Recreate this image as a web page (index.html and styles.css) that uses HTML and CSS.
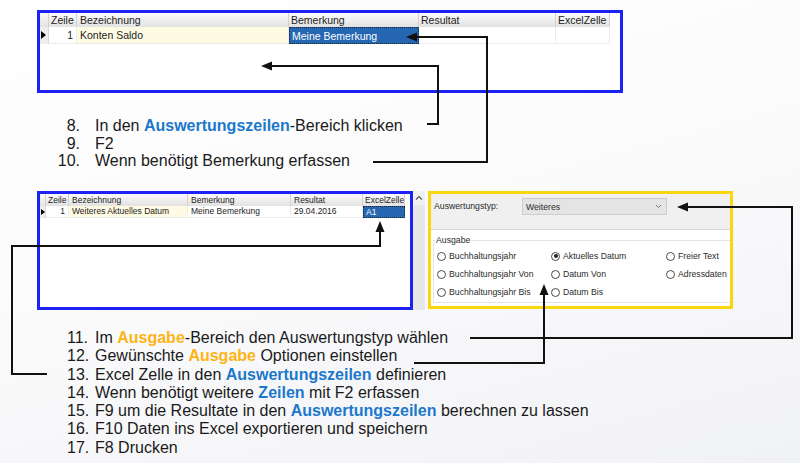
FILE: index.html
```
<!DOCTYPE html>
<html lang="de">
<head>
<meta charset="utf-8">
<title>Auswertung</title>
<link rel="stylesheet" href="styles.css">
</head>
<body>
<div class="page">
  <div class="grid grid-top">
    <div class="row head">
      <div class="c ind"></div><div class="c zeile">Zeile</div><div class="c bez">Bezeichnung</div><div class="c bem">Bemerkung</div><div class="c res">Resultat</div><div class="c xl">ExcelZelle</div>
    </div>
    <div class="row data">
      <div class="c ind"><span class="tri"></span></div><div class="c zeile num">1</div><div class="c bez yel">Konten Saldo</div><div class="c bem sel">Meine Bemerkung</div><div class="c res"></div><div class="c xl"></div>
    </div>
  </div>

  <div class="list list-top">
    <div class="item"><span class="n">8.</span><span class="t">In den <b class="blue">Auswertungszeilen</b>-Bereich klicken</span></div>
    <div class="item"><span class="n">9.</span><span class="t">F2</span></div>
    <div class="item"><span class="n">10.</span><span class="t">Wenn benötigt Bemerkung erfassen</span></div>
  </div>

  <div class="middle">
    <div class="grid grid-mid">
      <div class="row head">
        <div class="c ind"></div><div class="c zeile">Zeile</div><div class="c bez">Bezeichnung</div><div class="c bem">Bemerkung</div><div class="c res">Resultat</div><div class="c xl">ExcelZelle</div>
      </div>
      <div class="row data">
        <div class="c ind"><span class="tri"></span></div><div class="c zeile num">1</div><div class="c bez yel">Weiteres Aktuelles Datum</div><div class="c bem">Meine Bemerkung</div><div class="c res">29.04.2016</div><div class="c xl sel">A1</div>
      </div>
    </div>
    <div class="scroll">
      <div class="scroll-btn"><svg width="8" height="6" viewBox="0 0 8 6"><path d="M1 4.5 L4 1.5 L7 4.5" fill="none" stroke="#555" stroke-width="1.1"/></svg></div>
    </div>
    <div class="panel">
      <div class="typ">
        <span class="typ-lbl">Auswertungstyp:</span>
        <div class="select"><span>Weiteres</span><svg class="chev" width="7" height="5" viewBox="0 0 7 5"><path d="M1 1 L3.5 3.5 L6 1" fill="none" stroke="#777" stroke-width="1"/></svg></div>
      </div>
      <fieldset class="group">
        <legend>Ausgabe</legend>
        <div class="radios">
          <div class="radio"><span class="dot"></span>Buchhaltungsjahr</div>
          <div class="radio"><span class="dot on"></span>Aktuelles Datum</div>
          <div class="radio"><span class="dot"></span>Freier Text</div>
          <div class="radio"><span class="dot"></span>Buchhaltungsjahr Von</div>
          <div class="radio"><span class="dot"></span>Datum Von</div>
          <div class="radio"><span class="dot"></span>Adressdaten</div>
          <div class="radio"><span class="dot"></span>Buchhaltungsjahr Bis</div>
          <div class="radio"><span class="dot"></span>Datum Bis</div>
        </div>
      </fieldset>
    </div>
  </div>

  <div class="list list-bottom">
    <div class="item"><span class="n">11.</span><span class="t">Im <b class="orange">Ausgabe</b>-Bereich den Auswertungstyp wählen</span></div>
    <div class="item"><span class="n">12.</span><span class="t">Gewünschte <b class="orange">Ausgabe</b> Optionen einstellen</span></div>
    <div class="item"><span class="n">13.</span><span class="t">Excel Zelle in den <b class="blue">Auswertungszeilen</b> definieren</span></div>
    <div class="item"><span class="n">14.</span><span class="t">Wenn benötigt weitere <b class="blue">Zeilen</b> mit F2 erfassen</span></div>
    <div class="item"><span class="n">15.</span><span class="t">F9 um die Resultate in den <b class="blue">Auswertungszeilen</b> berechnen zu lassen</span></div>
    <div class="item"><span class="n">16.</span><span class="t">F10 Daten ins Excel exportieren und speichern</span></div>
    <div class="item"><span class="n">17.</span><span class="t">F8 Drucken</span></div>
  </div>

  <svg class="arrows" width="800" height="463" viewBox="0 0 800 463">
    <g fill="none" stroke="#111" stroke-width="2">
      <polyline points="427,124 438,124 438,66 270,66"/>
      <polyline points="373,162 487,162 487,37 414,37"/>
      <polyline points="470,338 792,338 792,207 686,207"/>
      <polyline points="414,363 544,363 544,293"/>
      <polyline points="47,374 12,374 12,246 380,246 380,230"/>
    </g>
    <g fill="#111">
      <polygon points="261,66 272,61.5 272,70.5"/>
      <polygon points="406,37 417,32.5 417,41.5"/>
      <polygon points="677,207 688,202.5 688,211.5"/>
      <polygon points="544,284 539.5,295 548.5,295"/>
      <polygon points="380,221 375.5,232 384.5,232"/>
    </g>
  </svg>
</div>
</body>
</html>
```

FILE: styles.css
```
* { box-sizing: border-box; }

html, body {
  margin: 0;
  padding: 0;
}

body {
  width: 800px;
  height: 463px;
  overflow: hidden;
  font-family: "Liberation Sans", Arial, sans-serif;
  color: #1a1a1a;
}

.page {
  position: relative;
  width: 800px;
  height: 463px;
  padding-top: 10px;
  background: linear-gradient(165deg, #ffffff 0%, #fbfbfc 45%, #f1f2f5 100%);
}

/* ---------- grids ---------- */
.grid {
  background: #fff;
  border: 3px solid #1c22f5;
}

.grid-top {
  margin-left: 37px;
  width: 586px;
  height: 83px;
  font-size: 10.5px;
}

.row {
  display: flex;
}

.c {
  flex: none;
  white-space: nowrap;
  overflow: hidden;
  padding: 0 2px;
}

.head .c {
  background: linear-gradient(#fbfbfb, #e2e2e2);
  border-right: 1px solid #d2d2d2;
  color: #222;
}

.data .c {
  border-right: 1px solid #ececec;
  border-bottom: 1px solid #ececec;
  color: #1e1e1e;
}

.data .ind {
  background: #eeeeee;
  border-right: 1px solid #d8d8d8;
  display: flex;
  align-items: center;
  padding: 0 0 0 1px;
}

.tri {
  width: 0;
  height: 0;
  border-left: 5px solid #000;
  border-top: 4px solid transparent;
  border-bottom: 4px solid transparent;
}

.num { text-align: right; }

.yel { background: #fffbe3; }

.data .sel {
  background: #2466b2;
  color: #fff;
  border: 1px dotted #222;
}

.grid-top .head { height: 14px; line-height: 14px; }
.grid-top .data { height: 17px; line-height: 16px; }
.grid-top .ind { width: 9px; }
.grid-top .zeile { width: 28px; }
.grid-top .num { padding-right: 3px; }
.grid-top .bez { width: 212px; padding-left: 3px; }
.grid-top .bem { width: 130px; }
.grid-top .res { width: 137px; }
.grid-top .xl { width: 54px; }

.grid-mid {
  width: 376px;
  height: 119px;
  font-size: 8.5px;
}

.grid-mid .head { height: 12px; line-height: 12px; }
.grid-mid .data { height: 12px; line-height: 11px; }
.grid-mid .data .tri { border-left-width: 4px; border-top-width: 3px; border-bottom-width: 3px; }
.grid-mid .ind { width: 6px; }
.grid-mid .zeile { width: 23px; }
.grid-mid .num { padding-right: 3px; }
.grid-mid .bez { width: 119px; padding-left: 3px; }
.grid-mid .bem { width: 103px; padding-left: 3px; }
.grid-mid .res { width: 72px; padding-left: 3px; }
.grid-mid .xl { width: 42px; }

/* ---------- lists ---------- */
.list {
  font-size: 16px;
}

.list-top {
  margin-top: 24px;
  line-height: 17.5px;
}

.list-bottom {
  margin-top: 19px;
  line-height: 18.3px;
}

.item {
  display: flex;
  white-space: nowrap;
}

.list-top .n {
  width: 80px;
  text-align: right;
}

.list-top .t {
  padding-left: 15px;
}

.list-bottom .n {
  width: 95px;
  padding-left: 67px;
}

b.blue { color: #1b78cc; }
b.orange { color: #fdb414; }

/* ---------- middle row ---------- */
.middle {
  display: flex;
  margin-left: 37px;
  margin-top: 21.5px;
  height: 119px;
}

.scroll {
  width: 12px;
  background: #e7e7e7;
  margin-right: 3px;
}

.scroll-btn {
  height: 14px;
  background: #f1f1f1;
  display: flex;
  align-items: center;
  justify-content: center;
}

.panel {
  width: 305px;
  height: 118px;
  border: 3px solid #fbd50e;
  background: #fff;
  font-size: 8.7px;
  color: #2a2a2a;
}

.typ {
  height: 36px;
  background: #f0f0f0;
  border-bottom: 1px solid #d9d9d9;
  display: flex;
  align-items: flex-start;
  padding: 4px 0 0 3px;
}

.typ-lbl {
  width: 88px;
  line-height: 17px;
}

.select {
  width: 145px;
  height: 17px;
  background: #e4e4e4;
  border: 1px solid #cdcdcd;
  display: flex;
  align-items: center;
  justify-content: space-between;
  padding: 0 4px 0 3px;
}

.group {
  margin: 5px 0 0 2px;
  padding: 0 0 1px 3px;
  border: 1px solid #e3e3e3;
  border-right: 0;
  min-width: 0;
}

.group legend {
  padding: 0 1px;
  margin-left: -2px;
  line-height: 10px;
}

.radios {
  display: grid;
  grid-template-columns: 114px 115px auto;
  grid-auto-rows: 18px;
  padding-top: 2px;
}

.radio {
  display: flex;
  align-items: center;
  gap: 3px;
  white-space: nowrap;
}

.dot {
  width: 9px;
  height: 9px;
  border: 1px solid #4a4a4a;
  border-radius: 50%;
  background: #fff;
  display: flex;
  align-items: center;
  justify-content: center;
}

.dot.on::after {
  content: "";
  width: 4px;
  height: 4px;
  border-radius: 50%;
  background: #222;
}

/* ---------- arrows overlay ---------- */
.arrows {
  position: absolute;
  left: 0;
  top: 0;
  pointer-events: none;
}
```
